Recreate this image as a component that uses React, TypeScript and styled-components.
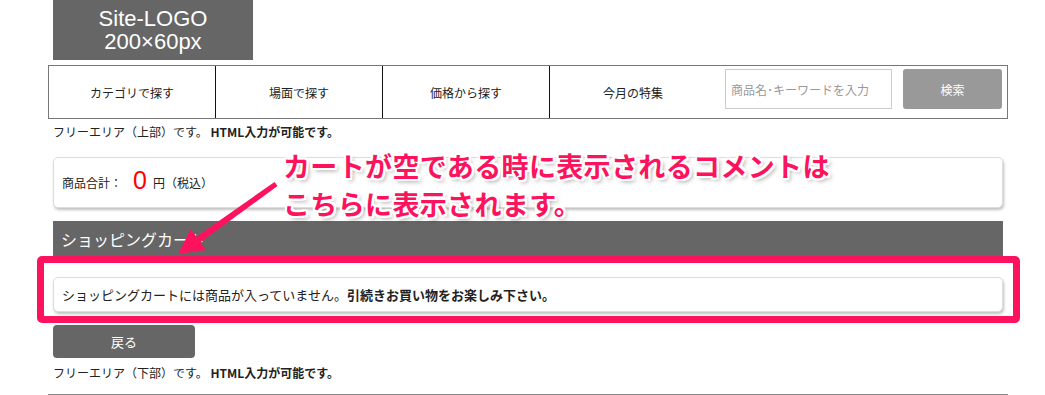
import styled, { createGlobalStyle } from 'styled-components'

const GlobalStyle = createGlobalStyle`
  body {
    margin: 0;
    background: #fff;
    color: #222;
    font-family: "Noto Sans CJK JP", "Liberation Sans", sans-serif;
  }
`

const Page = styled.div`
  position: relative;
  width: 1045px;
  height: 395px;
  overflow: hidden;
`

const Container = styled.div`
  width: 960px;
  margin-left: 48px;
`

const Logo = styled.div`
  width: 200px;
  height: 60px;
  margin-left: 5px;
  background: #666;
  color: #fff;
  font-family: "Liberation Sans", Arial, sans-serif;
  font-size: 22px;
  line-height: 23px;
  text-align: center;
  display: flex;
  flex-direction: column;
  justify-content: center;
`

const Nav = styled.nav`
  margin-top: 5px;
  height: 52px;
  border: 1px solid #777;
  display: flex;
`

const NavItem = styled.a`
  width: 166px;
  display: flex;
  align-items: center;
  justify-content: center;
  font-size: 12px;
  color: #222;
  text-decoration: none;
  & + & {
    border-left: 1px solid #111;
  }
`

const SearchForm = styled.form`
  flex: 1;
  display: flex;
  align-items: flex-start;
  padding: 3px 0 0 9px;
  gap: 11px;
`

const SearchInput = styled.input`
  box-sizing: border-box;
  width: 167px;
  height: 40px;
  border: 1px solid #ccc;
  padding: 0 5px;
  font-family: inherit;
  font-size: 12px;
  outline: none;
  &::placeholder {
    color: #999;
  }
`

const SearchButton = styled.button`
  width: 99px;
  height: 40px;
  border: none;
  border-radius: 3px;
  background: #999;
  color: #fff;
  font-family: inherit;
  font-size: 12px;
`

const Content = styled.div`
  padding: 0 5px;
`

const FreeText = styled.p<{ $top: number }>`
  margin: ${(p) => p.$top}px 0 0;
  font-size: 12px;
  line-height: 18px;
  strong {
    font-weight: 700;
  }
`

const Panel = styled.div<{ $height: number; $top: number }>`
  box-sizing: border-box;
  height: ${(p) => p.$height}px;
  margin-top: ${(p) => p.$top}px;
  border: 1px solid #ddd;
  border-radius: 5px;
  box-shadow: 1px 2px 3px rgba(0, 0, 0, 0.25);
  display: flex;
  align-items: center;
  padding: 0 8px;
  background: #fff;
`

const TotalLabel = styled.span`
  font-size: 12px;
`

const TotalValue = styled.span`
  color: #ff0000;
  font-family: "Liberation Sans", Arial, sans-serif;
  font-size: 25px;
  margin: 0 6px 0 11px;
  position: relative;
  top: -2px;
`

const SectionHeader = styled.h2`
  margin: 13px 0 0;
  height: 36px;
  background: #666;
  color: #fff;
  font-size: 16px;
  font-weight: 400;
  display: flex;
  align-items: center;
  padding: 0 8px;
`

const Message = styled.p`
  margin: 0;
  font-size: 13px;
  strong {
    font-weight: 700;
  }
`

const BackButton = styled.button`
  display: block;
  margin-top: 13px;
  width: 142px;
  height: 33px;
  border: none;
  border-radius: 4px;
  background: #666;
  color: #fff;
  font-family: inherit;
  font-size: 13px;
`

const Rule = styled.hr`
  margin: 12px 0 0;
  border: none;
  border-top: 1px solid #888;
`

const HighlightFrame = styled.div`
  position: absolute;
  left: 37px;
  top: 256px;
  width: 983px;
  height: 67px;
  box-sizing: border-box;
  border: 7px solid #fd135d;
  border-radius: 5px;
`

const Callout = styled.div`
  position: absolute;
  left: 283px;
  top: 147px;
  color: #fd135d;
  font-size: 27px;
  font-weight: 700;
  line-height: 38px;
  letter-spacing: 0.35px;
  text-shadow: 2px 0 0 #fff, -2px 0 0 #fff, 0 2px 0 #fff, 0 -2px 0 #fff,
    2px 2px 0 #fff, -2px -2px 0 #fff, 2px -2px 0 #fff, -2px 2px 0 #fff,
    3px 3px 4px rgba(0, 0, 0, 0.35);
`

const ArrowSvg = styled.svg`
  position: absolute;
  left: 170px;
  top: 175px;
  width: 115px;
  height: 85px;
`

const navItems = ['カテゴリで探す', '場面で探す', '価格から探す', '今月の特集']

export default function App() {
  return (
    <Page>
      <GlobalStyle />
      <Container>
        <Logo>
          <span>Site-LOGO</span>
          <span>200×60px</span>
        </Logo>
        <Nav>
          {navItems.map((item) => (
            <NavItem key={item} href="#">
              {item}
            </NavItem>
          ))}
          <SearchForm onSubmit={(e) => e.preventDefault()}>
            <SearchInput placeholder="商品名･キーワードを入力" />
            <SearchButton type="submit">検索</SearchButton>
          </SearchForm>
        </Nav>
        <Content>
          <FreeText $top={4}>
            フリーエリア（上部）です。 <strong>HTML入力が可能です。</strong>
          </FreeText>
          <Panel $height={51} $top={16}>
            <TotalLabel>商品合計：</TotalLabel>
            <TotalValue>0</TotalValue>
            <TotalLabel>円（税込）</TotalLabel>
          </Panel>
          <SectionHeader>ショッピングカート</SectionHeader>
          <Panel $height={35} $top={20}>
            <Message>
              ショッピングカートには商品が入っていません。
              <strong>引続きお買い物をお楽しみ下さい。</strong>
            </Message>
          </Panel>
          <BackButton>戻る</BackButton>
          <FreeText $top={6}>
            フリーエリア（下部）です。 <strong>HTML入力が可能です。</strong>
          </FreeText>
        </Content>
        <Rule />
      </Container>

      <HighlightFrame />
      <ArrowSvg viewBox="170 175 115 85">
        <polygon
          fill="#fd135d"
          points="277.5,186 274.5,182 196.4,236.7 190.8,228.9 178,254 206,250 200.4,242.3"
        />
      </ArrowSvg>
      <Callout>
        カートが空である時に表示されるコメントは
        <br />
        こちらに表示されます。
      </Callout>
    </Page>
  )
}
